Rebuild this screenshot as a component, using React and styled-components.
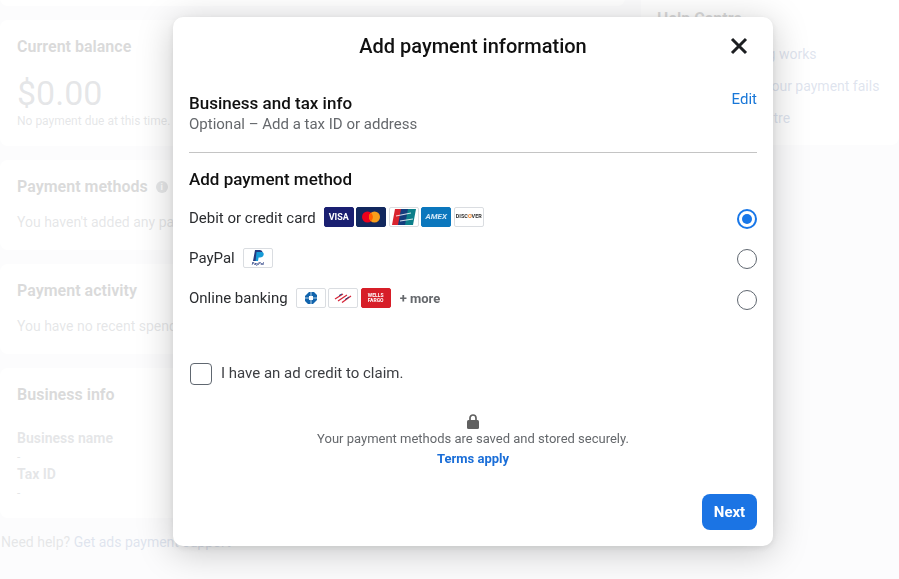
import React from "react";
import styled, { createGlobalStyle } from "styled-components";

const GlobalStyle = createGlobalStyle`
  html, body {
    margin: 0;
    height: 100%;
    overflow: hidden;
    background: #e9ebee;
    font-family: Roboto, "Liberation Sans", sans-serif;
    color: #1c1e21;
  }
`;

const Page = styled.div`
  display: grid;
  grid-template-columns: 625px 258px;
  column-gap: 16px;
  height: 609px;
  overflow: hidden;
  margin-top: -30px;
`;

const Column = styled.div`
  display: flex;
  flex-direction: column;
  gap: 14px;
`;

const Card = styled.section`
  background: #fff;
  border-radius: 8px;
  padding: ${(p) => p.$padding || "17px"};
  height: ${(p) => p.$height}px;
  box-sizing: border-box;
  flex: none;
`;

const CardTitle = styled.h3`
  margin: 0;
  font-size: 16px;
  line-height: 20px;
  font-weight: 700;
  display: flex;
  align-items: center;
  gap: 8px;
`;

const InfoDot = styled.span`
  width: 12px;
  height: 12px;
  border-radius: 50%;
  background: #606770;
  color: #fff;
  font-size: 9px;
  line-height: 12px;
  text-align: center;
`;

const Amount = styled.div`
  font-size: 34px;
  line-height: 40px;
  margin-top: 16px;
  color: #606770;
`;

const Muted = styled.p`
  margin: ${(p) => p.$top || 0}px 0 0;
  font-size: ${(p) => p.$size || 14}px;
  line-height: 16px;
  color: #606770;
`;

const FieldLabel = styled.div`
  font-size: 14px;
  line-height: 16px;
  font-weight: 700;
  color: #606770;
  margin-top: ${(p) => p.$top}px;
`;

const HelpFooter = styled.div`
  font-size: 14px;
  line-height: 16px;
  color: #606770;
  padding: 2px 1px;
`;

const HelpLink = styled.a`
  display: block;
  font-size: 14px;
  line-height: 16px;
  color: #385898;
  margin-top: ${(p) => p.$top}px;
`;

const FooterLink = styled.a`
  color: #385898;
`;

const Overlay = styled.div`
  position: fixed;
  inset: 0;
  background: rgba(255, 255, 255, 0.84);
  padding: 17px 0 0 173px;
`;

const Modal = styled.div`
  width: 600px;
  height: 529px;
  box-sizing: border-box;
  background: #fff;
  border-radius: 10px;
  padding: 0 16px;
  box-shadow: 0 6px 36px rgba(0, 0, 0, 0.22), 0 2px 6px rgba(0, 0, 0, 0.08);
  display: flex;
  flex-direction: column;
`;

const Header = styled.header`
  height: 58px;
  flex: none;
  display: flex;
  align-items: center;
  justify-content: center;
  position: relative;
`;

const Title = styled.h2`
  margin: 0;
  font-size: 20px;
  line-height: 24px;
  font-weight: 500;
  color: #111;
`;

const CloseButton = styled.button`
  position: absolute;
  right: 9px;
  top: 20px;
  width: 18px;
  height: 18px;
  padding: 0;
  border: 0;
  background: none;
  display: block;
`;

const TaxSection = styled.div`
  display: flex;
  justify-content: space-between;
  align-items: flex-start;
  padding-top: 18px;
  height: 78px;
  box-sizing: border-box;
  border-bottom: 1px solid #c4c4c4;
  flex: none;
`;

const SectionTitle = styled.div`
  font-size: 17px;
  line-height: 20px;
  font-weight: 500;
  color: #111;
`;

const Subtitle = styled.div`
  font-size: 15px;
  line-height: 20px;
  margin-top: 1px;
  color: #65686c;
`;

const EditLink = styled.a`
  font-size: 15px;
  line-height: 18px;
  margin-top: -3px;
  color: #1877d8;
`;

const MethodHeading = styled(SectionTitle)`
  margin-top: 16px;
`;

const MethodList = styled.div`
  display: flex;
  flex-direction: column;
  margin-top: 9px;
`;

const MethodRow = styled.label`
  height: 40px;
  display: flex;
  align-items: center;
  font-size: 15px;
  color: #2b2d30;
`;

const MethodName = styled.span`
  margin-right: 8px;
`;

const Logos = styled.span`
  display: flex;
  gap: 2.5px;
  margin-top: ${(p) => p.$top || 0}px;
`;

const Logo = styled.span`
  width: 30px;
  height: 20px;
  box-sizing: border-box;
  border-radius: 2px;
  background: ${(p) => p.$bg || "#fff"};
  border: 1px solid ${(p) => p.$bg || "#dadde1"};
  display: flex;
  flex-direction: column;
  align-items: center;
  justify-content: center;
  overflow: hidden;
  color: ${(p) => p.$color || "#fff"};
  font-size: ${(p) => p.$size || 8}px;
  line-height: 1;
  font-weight: 700;
  font-style: ${(p) => (p.$italic ? "italic" : "normal")};
  text-align: center;
  white-space: nowrap;
`;

const DiscoverDot = styled.span`
  color: #f58220;
`;

const PayPalWord = styled.span`
  font-size: 4px;
  line-height: 4px;
  color: #253b80;
  font-style: italic;
`;

const More = styled.span`
  margin-left: 9px;
  font-size: 13px;
  font-weight: 700;
  color: #65686c;
`;

const Radio = styled.span`
  margin-left: auto;
  margin-top: ${(p) => p.$top || 2}px;
  width: 20px;
  height: 20px;
  box-sizing: border-box;
  border-radius: 50%;
  border: ${(p) => (p.$checked ? "2px solid #1877e8" : "1px solid #606770")};
  display: flex;
  align-items: center;
  justify-content: center;
  &::after {
    content: "";
    display: ${(p) => (p.$checked ? "block" : "none")};
    width: 10px;
    height: 10px;
    border-radius: 50%;
    background: #1877e8;
  }
`;

const CreditRow = styled.label`
  display: flex;
  align-items: center;
  gap: 9px;
  margin: 45px 0 0 1px;
  font-size: 15px;
  color: #3c3e42;
`;

const CreditText = styled.span`
  margin-top: -2px;
`;

const Checkbox = styled.span`
  width: 22px;
  height: 22px;
  box-sizing: border-box;
  border: 1px solid #606770;
  border-radius: 4px;
`;

const Secure = styled.div`
  display: flex;
  flex-direction: column;
  align-items: center;
  margin-top: 29px;
`;

const SecureText = styled.div`
  font-size: 13px;
  line-height: 16px;
  margin-top: 1px;
  color: #65686c;
`;

const TermsLink = styled.a`
  font-size: 13px;
  line-height: 16px;
  font-weight: 700;
  color: #1a6ed8;
  margin-top: 4px;
`;

const Footer = styled.div`
  display: flex;
  justify-content: flex-end;
  margin-top: 27px;
`;

const NextButton = styled.button`
  width: 55px;
  height: 36px;
  border: 0;
  padding: 0;
  border-radius: 8px;
  background: #1b74e4;
  color: #fff;
  font: 700 15px Roboto, "Liberation Sans", sans-serif;
`;

function CloseIcon() {
  return (
    <svg width="18" height="18" viewBox="0 0 18 18">
      <path d="M2 2 L16 16 M16 2 L2 16" stroke="#1c1e21" strokeWidth="3" />
    </svg>
  );
}

function LockIcon() {
  return (
    <svg width="14" height="16" viewBox="0 0 14 16" style={{ display: "block" }}>
      <path d="M4 6.5 V4 a3 3 0 0 1 6 0 V6.5" fill="none" stroke="#606060" strokeWidth="1.7" />
      <rect x="1" y="6" width="12" height="9" rx="1.5" fill="#606060" />
    </svg>
  );
}

function Mastercard() {
  return (
    <svg width="20" height="12" viewBox="0 0 20 12">
      <circle cx="6.5" cy="6" r="5.5" fill="#eb001b" />
      <circle cx="13.5" cy="6" r="5.5" fill="#f79e1b" />
      <path d="M10 1.8 a5.5 5.5 0 0 1 0 8.4 a5.5 5.5 0 0 1 0 -8.4" fill="#ff5f00" />
    </svg>
  );
}

function UnionPay() {
  return (
    <svg width="24" height="16" viewBox="0 0 24 16">
      <path d="M3 0 H10 L7 16 H0 Z" fill="#d9232e" />
      <path d="M9 0 H17 L14 16 H6 Z" fill="#143c7d" />
      <path d="M16 0 H24 L21 16 H13 Z" fill="#0c7f8a" />
      <path d="M4 7 L19 4 M8 12 L21 10" stroke="#fff" strokeWidth="1.2" opacity="0.8" />
    </svg>
  );
}

function PayPalMark() {
  return (
    <svg width="14" height="12" viewBox="0 0 14 12" style={{ display: "block" }}>
      <path d="M4 0 H8.5 C11.5 0 12 2.2 11 4 C10 6 8 6.5 6 6.5 L5.2 11 H2 Z" fill="#253b80" />
      <path d="M5.5 2 H10 C12.8 2 13.2 4 12.4 5.5 C11.4 7.5 9.5 7.6 7.6 7.6 L7 11 H4.6 Z" fill="#179bd7" />
    </svg>
  );
}

function Chase() {
  return (
    <svg width="12" height="12" viewBox="0 0 12 12">
      <path
        d="M4 0 H9 L12 3 V8 L8 12 H3 L0 9 V4 Z M4 4 V8 H8 V4 Z"
        fill="#1164ad"
        fillRule="evenodd"
      />
      <path d="M6 0 V4 M12 6 H8 M6 12 V8 M0 6 H4" stroke="#fff" strokeWidth="0.7" />
    </svg>
  );
}

function BankOfAmerica() {
  return (
    <svg width="18" height="10" viewBox="0 0 18 10">
      <path d="M1 6 L9 1 M4 8 L13 2 M8 9.5 L17 3" stroke="#d5263a" strokeWidth="1.3" />
      <path d="M5 2.5 L8 1 M11 6.5 L15 4" stroke="#1f3f7a" strokeWidth="1" />
    </svg>
  );
}

export default function App() {
  return (
    <>
      <GlobalStyle />
      <Page>
        <Column>
          <Card $height={36} />
          <Card $height={126}>
            <CardTitle>Current balance</CardTitle>
            <Amount>$0.00</Amount>
            <Muted $size={12}>No payment due at this time.</Muted>
          </Card>
          <Card $height={90}>
            <CardTitle>
              Payment methods <InfoDot>i</InfoDot>
            </CardTitle>
            <Muted $top={17}>You haven't added any payment methods.</Muted>
          </Card>
          <Card $height={90}>
            <CardTitle>Payment activity</CardTitle>
            <Muted $top={17}>You have no recent spending.</Muted>
          </Card>
          <Card $height={150}>
            <CardTitle>Business info</CardTitle>
            <FieldLabel $top={25}>Business name</FieldLabel>
            <Muted $size={12} $top={3}>-</Muted>
            <FieldLabel $top={1}>Tax ID</FieldLabel>
            <Muted $size={12} $top={3}>-</Muted>
          </Card>
          <HelpFooter>
            Need help? <FooterLink>Get ads payment support</FooterLink>
          </HelpFooter>
        </Column>
        <Column>
          <Card $height={175} $padding="39px 16px 0">
            <CardTitle>Help Centre</CardTitle>
            <HelpLink $top={17}>How your ad billing works</HelpLink>
            <HelpLink $top={16}>What to do when your payment fails</HelpLink>
            <HelpLink $top={16}>Go to the Help Centre</HelpLink>
          </Card>
        </Column>
      </Page>
      <Overlay>
        <Modal>
          <Header>
            <Title>Add payment information</Title>
            <CloseButton aria-label="Close">
              <CloseIcon />
            </CloseButton>
          </Header>
          <TaxSection>
            <div>
              <SectionTitle>Business and tax info</SectionTitle>
              <Subtitle>Optional – Add a tax ID or address</Subtitle>
            </div>
            <EditLink>Edit</EditLink>
          </TaxSection>
          <MethodHeading>Add payment method</MethodHeading>
          <MethodList>
            <MethodRow>
              <MethodName>Debit or credit card</MethodName>
              <Logos $top={-2}>
                <Logo $bg="#1a1f71" $size={9}>VISA</Logo>
                <Logo $bg="#12285e"><Mastercard /></Logo>
                <Logo><UnionPay /></Logo>
                <Logo $bg="#0b77bd" $color="#cfe6f7" $italic>AMEX</Logo>
                <Logo $color="#333" $size={5.5}>
                  <span>DISC<DiscoverDot>O</DiscoverDot>VER</span>
                </Logo>
              </Logos>
              <Radio $checked />
            </MethodRow>
            <MethodRow>
              <MethodName>PayPal</MethodName>
              <Logos>
                <Logo>
                  <PayPalMark />
                  <PayPalWord>PayPal</PayPalWord>
                </Logo>
              </Logos>
              <Radio />
            </MethodRow>
            <MethodRow>
              <MethodName>Online banking</MethodName>
              <Logos>
                <Logo><Chase /></Logo>
                <Logo><BankOfAmerica /></Logo>
                <Logo $bg="#d71e28" $size={5}>
                  <span>WELLS</span>
                  <span>FARGO</span>
                </Logo>
              </Logos>
              <More>+ more</More>
              <Radio $top={4} />
            </MethodRow>
          </MethodList>
          <CreditRow>
            <Checkbox />
            <CreditText>I have an ad credit to claim.</CreditText>
          </CreditRow>
          <Secure>
            <LockIcon />
            <SecureText>Your payment methods are saved and stored securely.</SecureText>
            <TermsLink>Terms apply</TermsLink>
          </Secure>
          <Footer>
            <NextButton>Next</NextButton>
          </Footer>
        </Modal>
      </Overlay>
    </>
  );
}
